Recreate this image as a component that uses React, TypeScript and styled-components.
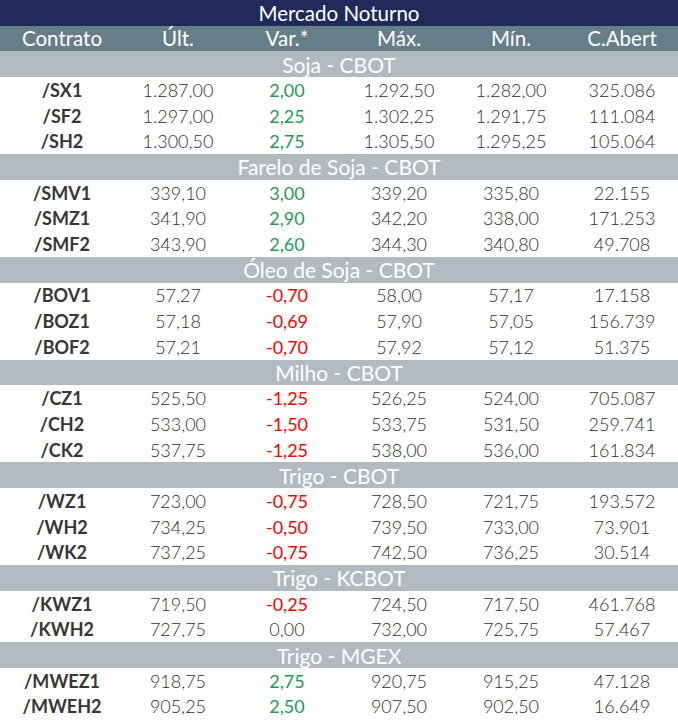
import styled, { createGlobalStyle } from "styled-components";

const Global = createGlobalStyle`
  body {
    margin: 0;
    background: #ffffff;
    font-family: Lato, "Open Sans", sans-serif;
  }
`;

const ROW = "25.7px";
const COLS = "124px 108px 110px 114px 110px 112px";

const Table = styled.div`
  width: 678px;
  display: flex;
  flex-direction: column;
`;

const Title = styled.div`
  height: ${ROW};
  background: #1f295a;
  color: #ffffff;
  font-size: 20.5px;
  display: flex;
  align-items: center;
  justify-content: center;
`;

const HeadRow = styled.div`
  height: ${ROW};
  background: #667d8a;
  display: grid;
  grid-template-columns: ${COLS};
`;

const HeadCell = styled.div`
  color: #ffffff;
  font-size: 20.5px;
  display: flex;
  align-items: center;
  justify-content: center;
  padding-bottom: 2px;
`;

const Section = styled.div`
  height: ${ROW};
  background: #b3babf;
  color: #ffffff;
  font-size: 21px;
  display: flex;
  align-items: center;
  justify-content: center;
`;

const Row = styled.div`
  height: ${ROW};
  display: grid;
  grid-template-columns: ${COLS};
`;

const Cell = styled.div<{ $tone?: "up" | "down" | "flat"; $name?: boolean }>`
  display: flex;
  align-items: center;
  justify-content: center;
  font-size: 18px;
  font-weight: ${(p) => (p.$name ? 700 : p.$tone === "up" || p.$tone === "down" ? 400 : 300)};
  color: ${(p) =>
    p.$name ? "#363636" : p.$tone === "up" ? "#1f985b" : p.$tone === "down" ? "#ff0000" : "#2e2e2e"};
`;

type Quote = [string, string, string, string, string, string];

const groups: { title: string; rows: Quote[] }[] = [
  {
    title: "Soja - CBOT",
    rows: [
      ["/SX1", "1.287,00", "2,00", "1.292,50", "1.282,00", "325.086"],
      ["/SF2", "1.297,00", "2,25", "1.302,25", "1.291,75", "111.084"],
      ["/SH2", "1.300,50", "2,75", "1.305,50", "1.295,25", "105.064"],
    ],
  },
  {
    title: "Farelo de Soja - CBOT",
    rows: [
      ["/SMV1", "339,10", "3,00", "339,20", "335,80", "22.155"],
      ["/SMZ1", "341,90", "2,90", "342,20", "338,00", "171.253"],
      ["/SMF2", "343,90", "2,60", "344,30", "340,80", "49.708"],
    ],
  },
  {
    title: "Óleo de Soja - CBOT",
    rows: [
      ["/BOV1", "57,27", "-0,70", "58,00", "57,17", "17.158"],
      ["/BOZ1", "57,18", "-0,69", "57,90", "57,05", "156.739"],
      ["/BOF2", "57,21", "-0,70", "57,92", "57,12", "51.375"],
    ],
  },
  {
    title: "Milho - CBOT",
    rows: [
      ["/CZ1", "525,50", "-1,25", "526,25", "524,00", "705.087"],
      ["/CH2", "533,00", "-1,50", "533,75", "531,50", "259.741"],
      ["/CK2", "537,75", "-1,25", "538,00", "536,00", "161.834"],
    ],
  },
  {
    title: "Trigo - CBOT",
    rows: [
      ["/WZ1", "723,00", "-0,75", "728,50", "721,75", "193.572"],
      ["/WH2", "734,25", "-0,50", "739,50", "733,00", "73.901"],
      ["/WK2", "737,25", "-0,75", "742,50", "736,25", "30.514"],
    ],
  },
  {
    title: "Trigo - KCBOT",
    rows: [
      ["/KWZ1", "719,50", "-0,25", "724,50", "717,50", "461.768"],
      ["/KWH2", "727,75", "0,00", "732,00", "725,75", "57.467"],
    ],
  },
  {
    title: "Trigo - MGEX",
    rows: [
      ["/MWEZ1", "918,75", "2,75", "920,75", "915,25", "47.128"],
      ["/MWEH2", "905,25", "2,50", "907,50", "902,50", "16.649"],
    ],
  },
];

const heads = ["Contrato", "Últ.", "Var.*", "Máx.", "Mín.", "C.Abert"];

function tone(v: string): "up" | "down" | "flat" {
  if (v.startsWith("-")) return "down";
  if (v === "0,00") return "flat";
  return "up";
}

export default function App() {
  return (
    <>
      <Global />
      <Table>
        <Title>Mercado Noturno</Title>
        <HeadRow>
          {heads.map((h) => (
            <HeadCell key={h}>{h}</HeadCell>
          ))}
        </HeadRow>
        {groups.map((g) => (
          <div key={g.title}>
            <Section>{g.title}</Section>
            {g.rows.map((r) => (
              <Row key={r[0]}>
                <Cell $name>{r[0]}</Cell>
                <Cell>{r[1]}</Cell>
                <Cell $tone={tone(r[2])}>{r[2]}</Cell>
                <Cell>{r[3]}</Cell>
                <Cell>{r[4]}</Cell>
                <Cell>{r[5]}</Cell>
              </Row>
            ))}
          </div>
        ))}
      </Table>
    </>
  );
}
